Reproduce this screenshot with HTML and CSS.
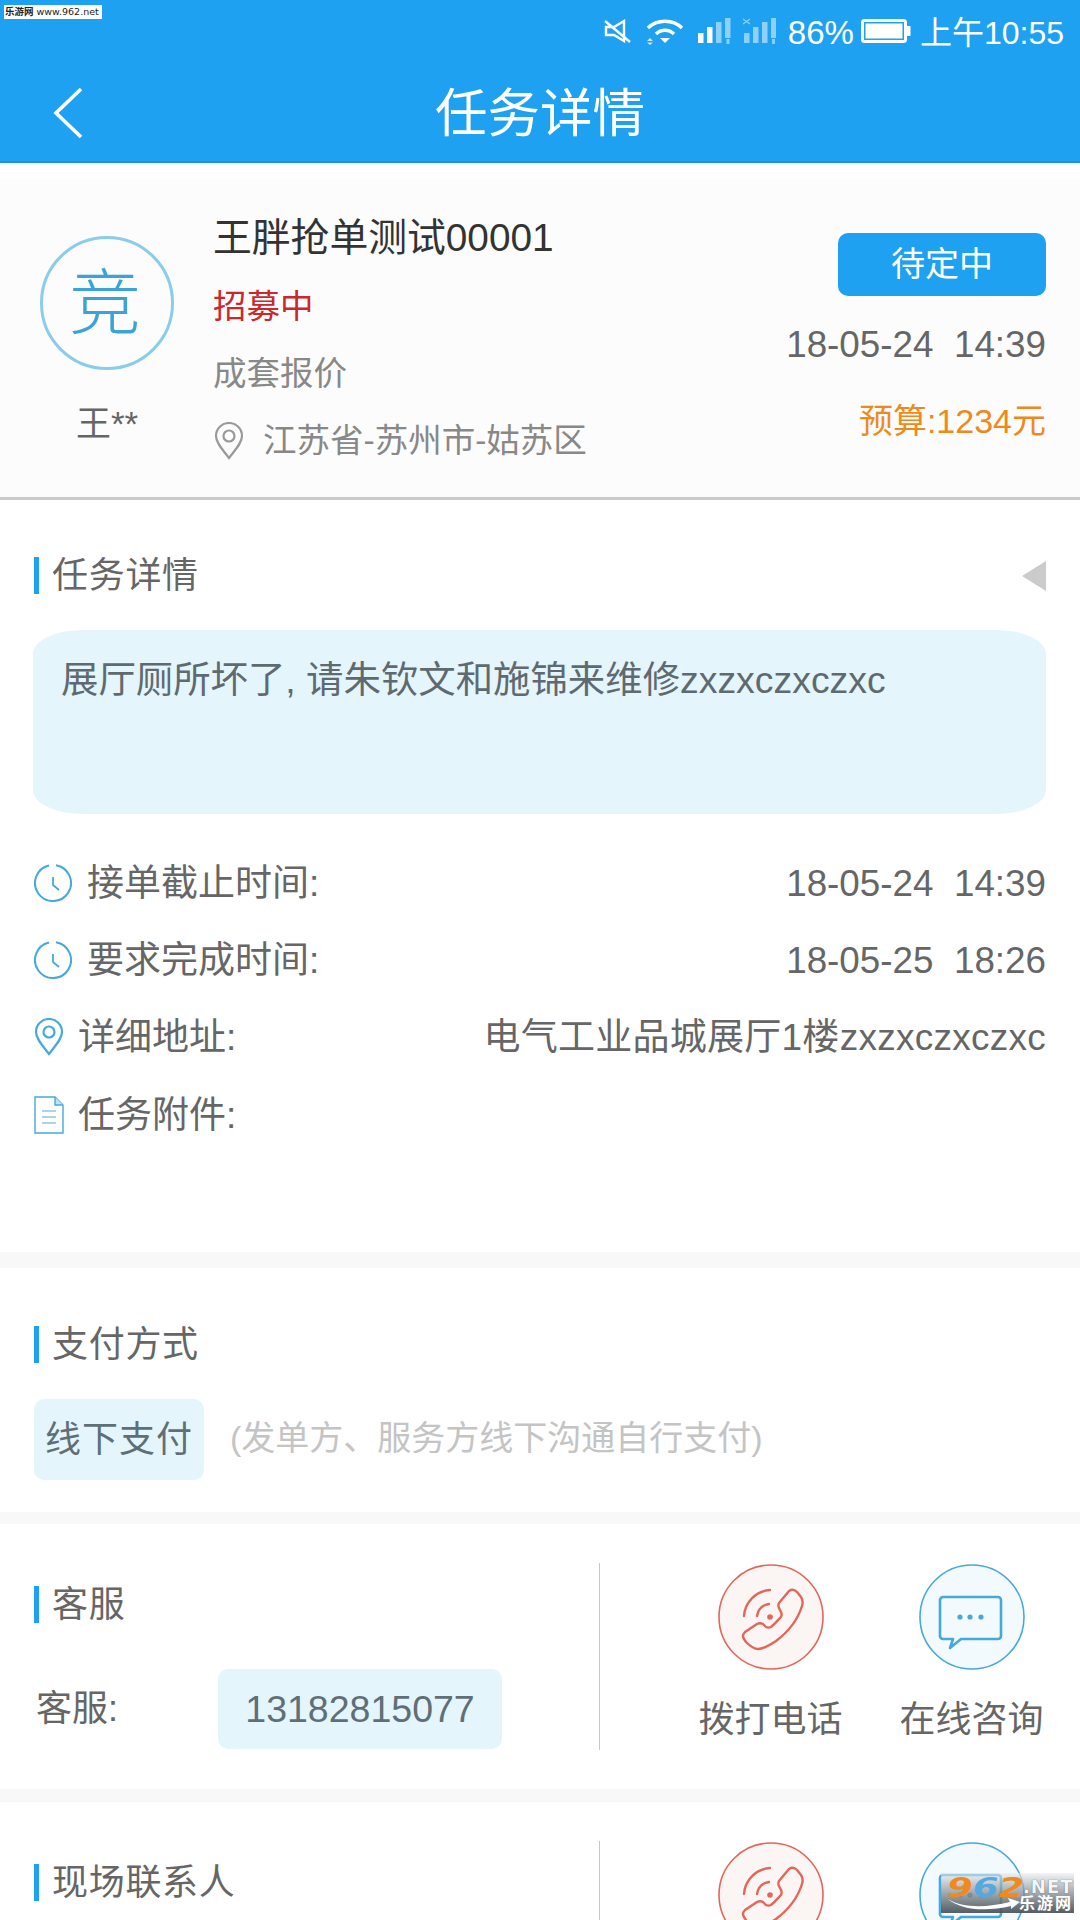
FILE: index.html
```html
<!DOCTYPE html>
<html lang="zh-CN">
<head>
<meta charset="utf-8">
<title>任务详情</title>
<link rel="stylesheet" href="styles.css">
</head>
<body>
<div class="page">
  <header class="appbar">
    <div class="status">
      <svg class="st-mute" viewBox="0 0 28 24"><g fill="none" stroke="#fff" stroke-width="2.4"><path d="M21 2v20L11 16H3V8h8z"/><path d="M2 2l25 21"/></g></svg>
      <svg class="st-wifi" viewBox="0 0 38 27"><g fill="none" stroke="#fff" stroke-width="3.4"><path d="M2 10C11 1 27 1 36 10"/><path d="M10 16c5-5 13-5 18 0"/></g><path d="M14 20h10l-5 5z" fill="#fff"/><path d="M1 23l3-3 3 3zM1 24.500l3 2.500 3-2.500z" fill="#cfe9fb"/></svg>
      <svg class="st-sig" viewBox="0 0 33 27"><g fill="#fff"><rect x="0" y="15" width="5.500" height="10"/><rect x="9" y="9" width="5.500" height="16"/></g><g fill="#8fd0f8"><rect x="18" y="4" width="5.500" height="21"/><rect x="27" y="0" width="5.500" height="20"/><rect x="28.500" y="21" width="3" height="5"/></g></svg>
      <svg class="st-sig" viewBox="0 0 33 27"><g fill="#8fd0f8"><rect x="1" y="15" width="5.500" height="10"/><rect x="10" y="9" width="5.500" height="16"/><rect x="19" y="4" width="5.500" height="21"/><rect x="28" y="0" width="5" height="20"/><rect x="29" y="21" width="3" height="5"/></g><path d="M0 1l7 5M7 1L0 6" stroke="#8fd0f8" stroke-width="1.400" fill="none"/></svg>
      <span class="st-pct">86%</span>
      <svg class="st-batt" viewBox="0 0 50 24"><rect x="1.500" y="1.500" width="43" height="21" rx="2" fill="#1ea1f1" stroke="#fff" stroke-width="3"/><rect x="4.500" y="4.500" width="37" height="15" fill="#fff"/><rect x="46" y="7" width="3.500" height="10" fill="#fff"/></svg>
      <span class="st-time">上午10:55</span>
    </div>
    <div class="navrow">
      <svg class="back" viewBox="0 0 30 52"><path d="M28 2L3 26l25 24" fill="none" stroke="#fff" stroke-width="3.6"/></svg>
      <h1 class="nav-title">任务详情</h1>
    </div>
  </header>

  <section class="summary">
    <div class="who">
      <div class="avatar">竞</div>
      <div class="who-name">王**</div>
    </div>
    <div class="info">
      <div class="info-title">王胖抢单测试00001</div>
      <div class="info-status">招募中</div>
      <div class="info-kind">成套报价</div>
      <div class="info-loc">
        <svg class="pin-gray" viewBox="0 0 30 38"><g fill="none" stroke="#999" stroke-width="2.2"><path d="M15 36C9 28 2 21 2 14a13 13 0 0 1 26 0c0 7-7 14-13 22z"/><circle cx="15" cy="14" r="5.5"/></g></svg>
        <span>江苏省-苏州市-姑苏区</span>
      </div>
    </div>
    <div class="meta">
      <div class="pending">待定中</div>
      <div class="meta-date">18-05-24&nbsp;&nbsp;14:39</div>
      <div class="meta-budget">预算:1234元</div>
    </div>
  </section>

  <section class="detail">
    <div class="head-row">
      <h2 class="heading">任务详情</h2>
      <span class="collapse"></span>
    </div>
    <div class="desc">展厅厕所坏了, 请朱钦文和施锦来维修zxzxczxczxc</div>
    <div class="row">
      <svg class="ic-clock" viewBox="0 0 38 38"><g fill="none" stroke="#45a9dc" stroke-width="2"><path d="M22 1.300A18 18 0 1 1 15 1.500"/><path d="M19 13v8l6 5" stroke-width="1.800"/></g></svg>
      <span class="row-label">接单截止时间:</span><span class="row-value">18-05-24&nbsp;&nbsp;14:39</span>
    </div>
    <div class="row">
      <svg class="ic-clock" viewBox="0 0 38 38"><g fill="none" stroke="#45a9dc" stroke-width="2"><path d="M22 1.300A18 18 0 1 1 15 1.500"/><path d="M19 13v8l6 5" stroke-width="1.800"/></g></svg>
      <span class="row-label">要求完成时间:</span><span class="row-value">18-05-25&nbsp;&nbsp;18:26</span>
    </div>
    <div class="row">
      <svg class="ic-small" viewBox="0 0 30 38"><g fill="none" stroke="#45a9dc" stroke-width="2.2"><path d="M15 36C9 28 2 21 2 14a13 13 0 0 1 26 0c0 7-7 14-13 22z"/><circle cx="15" cy="14" r="5.5"/></g></svg>
      <span class="row-label">详细地址:</span><span class="row-value row-addr">电气工业品城展厅1楼zxzxczxczxc</span>
    </div>
    <div class="row">
      <svg class="ic-small" viewBox="0 0 30 38"><g fill="none" stroke="#45a9dc" stroke-width="1.4"><path d="M1 1h20l8 8v28H1z"/><path d="M21 1v8h8" fill="#bfe2f3"/><path d="M8 15h14M8 21h14M8 27h14" stroke="#8cc8e6"/></g></svg>
      <span class="row-label">任务附件:</span>
    </div>
  </section>

  <section class="pay">
    <h2 class="heading">支付方式</h2>
    <div class="pay-row">
      <span class="chip">线下支付</span>
      <span class="pay-note">(发单方、服务方线下沟通自行支付)</span>
    </div>
  </section>

  <section class="contact">
    <div class="contact-left">
      <h2 class="heading">客服</h2>
      <div class="contact-line">
        <span class="contact-label">客服:</span>
        <span class="chip chip-phone">13182815077</span>
      </div>
    </div>
    <div class="actions">
      <div class="action">
        <svg class="round" viewBox="0 0 106 106"><circle cx="53" cy="53" r="52" fill="#fbf6f4" stroke="#e2665a" stroke-width="1.6"/><g fill="none" stroke="#e2665a" stroke-width="2.4" stroke-linecap="round" stroke-linejoin="round"><path d="M71 27C74 25 77 26 79 28L83 33C85 36 85 39 84 42C80 55 70 68 58 77C52 81 46 85 40 85C36 85 32 82 28 78L26 75C24 72 25 70 27 68L39 60C41 59 43 59 45 60L48 63C50 64 51 64 53 63C57 60 60 56 63 53C64 51 64 50 63 48L61 44C60 42 60 41 61 39Z"/><path d="M52 26C38 27 27 38 26 52"/><path d="M51 40C44 41 40 46 39 52"/></g><circle cx="52" cy="53" r="2.8" fill="#e2665a"/></svg>
        <span class="action-label">拨打电话</span>
      </div>
      <div class="action">
        <svg class="round" viewBox="0 0 106 106"><circle cx="53" cy="53" r="52" fill="#f3fafd" stroke="#45a9dc" stroke-width="1.6"/><path d="M21 36a3 3 0 0 1 3-3h55a3 3 0 0 1 3 3v36a3 3 0 0 1-3 3H42L31 84l3-9H24a3 3 0 0 1-3-3z" fill="none" stroke="#45a9dc" stroke-width="2.6" stroke-linejoin="round"/><g fill="#45a9dc"><circle cx="41" cy="53" r="2.6"/><circle cx="51" cy="53" r="2.6"/><circle cx="62" cy="53" r="2.6"/></g></svg>
        <span class="action-label">在线咨询</span>
      </div>
    </div>
  </section>

  <section class="contact">
    <div class="contact-left">
      <h2 class="heading">现场联系人</h2>
    </div>
    <div class="actions">
      <div class="action">
        <svg class="round" viewBox="0 0 106 106"><circle cx="53" cy="53" r="52" fill="#fbf6f4" stroke="#e2665a" stroke-width="1.6"/><g fill="none" stroke="#e2665a" stroke-width="2.4" stroke-linecap="round" stroke-linejoin="round"><path d="M71 27C74 25 77 26 79 28L83 33C85 36 85 39 84 42C80 55 70 68 58 77C52 81 46 85 40 85C36 85 32 82 28 78L26 75C24 72 25 70 27 68L39 60C41 59 43 59 45 60L48 63C50 64 51 64 53 63C57 60 60 56 63 53C64 51 64 50 63 48L61 44C60 42 60 41 61 39Z"/><path d="M52 26C38 27 27 38 26 52"/><path d="M51 40C44 41 40 46 39 52"/></g><circle cx="52" cy="53" r="2.8" fill="#e2665a"/></svg>
      </div>
      <div class="action">
        <svg class="round" viewBox="0 0 106 106"><circle cx="53" cy="53" r="52" fill="#f3fafd" stroke="#45a9dc" stroke-width="1.6"/><path d="M21 36a3 3 0 0 1 3-3h55a3 3 0 0 1 3 3v36a3 3 0 0 1-3 3H42L31 84l3-9H24a3 3 0 0 1-3-3z" fill="none" stroke="#45a9dc" stroke-width="2.6" stroke-linejoin="round"/><g fill="#45a9dc"><circle cx="41" cy="53" r="2.6"/><circle cx="51" cy="53" r="2.6"/><circle cx="62" cy="53" r="2.6"/></g></svg>
      </div>
    </div>
  </section>

  <div class="wm-top"><span class="wm-top-cn">乐游网</span> www.962.net</div>
  <div class="wm-logo">
    <svg class="wm-swoosh" viewBox="0 0 74 14"><path d="M1 2c14 9 38 9 62 3l-2-4 12 4-9 7 0-3C38 15 14 13 1 2z" fill="#fff"/></svg>
    <span class="wm-num"><b class="o">9</b><b class="b">6</b><b class="o">2</b></span>
    <span class="wm-net">.NET</span>
    <span class="wm-cn">乐游网</span>
  </div>
</div>
</body>
</html>
```

FILE: styles.css
```css
* { box-sizing: border-box; }
html, body { margin: 0; padding: 0; }
body {
  width: 1080px;
  height: 1920px;
  overflow: hidden;
  background: #fff;
  font-family: "Liberation Sans", "Noto Sans CJK SC", sans-serif;
  color: #666;
}
.page { position: relative; width: 1080px; height: 1920px; overflow: hidden; }

/* app bar */
.appbar { height: 163px; background: #1ea1f1; border-bottom: 2px solid #2191cf; }
.status { height: 66px; display: flex; align-items: center; justify-content: flex-end; padding-right: 16px; color: #fff; white-space: nowrap; }
.status svg { margin-bottom: 4px; flex: none; }
.st-mute { width: 28px; height: 24px; margin-right: 15px; }
.st-wifi { width: 38px; height: 27px; margin-right: 14px; }
.st-sig { width: 33px; height: 27px; margin-right: 12px; }
.st-pct { font-size: 33px; line-height: 66px; margin-right: 7px; }
.st-batt { width: 50px; height: 24px; margin-right: 9px; }
.st-time { font-size: 32px; line-height: 66px; }
.navrow { position: relative; height: 95px; display: flex; align-items: center; justify-content: center; }
.back { position: absolute; left: 53px; top: 21px; width: 30px; height: 52px; }
.nav-title { margin: 0; font-size: 52.5px; font-weight: 400; color: #fff; line-height: 60px; }

/* summary card */
.summary {
  margin-top: 15px;
  height: 322px;
  background: #fcfcfc;
  border-bottom: 3px solid #cbcbcb;
  display: flex;
  padding: 0 34px 0 40px;
}
.who { width: 134px; margin-right: 39px; padding-top: 58px; display: flex; flex-direction: column; align-items: center; flex: none; }
.avatar {
  width: 134px; height: 134px; border: 3px solid #8accec; border-radius: 50%;
  display: flex; align-items: center; justify-content: center;
  font-size: 72px; font-weight: 300; color: #3ba3d8; line-height: 1;
  padding-right: 4px;
}
.who-name { font-size: 35px; line-height: 40px; margin-top: 34px; color: #666; }
.info { flex: 1; padding-top: 38px; }
.info-title { font-size: 38.8px; line-height: 44px; color: #333; white-space: nowrap; }
.info-status { font-size: 33.5px; line-height: 40px; color: #c9282d; margin-top: 27px; }
.info-kind { font-size: 33.5px; line-height: 40px; color: #888; margin-top: 27px; }
.info-loc { display: flex; align-items: center; margin-top: 27px; color: #888; font-size: 33.5px; line-height: 40px; padding-left: 1px; }
.pin-gray { width: 30px; height: 38px; margin-right: 19px; }
.meta { width: 270px; display: flex; flex-direction: column; align-items: flex-end; padding-top: 55px; }
.pending { width: 208px; height: 63px; border-radius: 10px; background: #1ea1f1; color: #fff; font-size: 34px; line-height: 63px; text-align: center; }
.meta-date { font-size: 36.8px; line-height: 44px; margin-top: 27px; white-space: nowrap; color: #666; }
.meta-budget { font-size: 34px; line-height: 40px; margin-top: 34px; color: #ee8a1c; white-space: nowrap; }

/* section headings */
.heading {
  margin: 0;
  font-size: 36px;
  font-weight: 400;
  line-height: 37px;
  color: #666;
  border-left: 5px solid #1ea1f1;
  padding-left: 13px;
  letter-spacing: 0.7px;
}

/* task detail */
.detail { height: 768px; padding: 57px 34px 0 33px; border-bottom: 16px solid #f8f8f8; }
.head-row { display: flex; justify-content: space-between; align-items: center; padding-left: 1px; }
.collapse { width: 0; height: 0; border-style: solid; border-width: 15px 24px 15px 0; border-color: transparent #cbcbcb transparent transparent; }
.desc {
  margin-top: 36px;
  height: 184px;
  border-radius: 50px / 24px;
  background: #e4f5fc;
  padding: 28px 28px 0;
  font-size: 37.4px;
  line-height: 44px;
  color: #5f6a70;
  white-space: nowrap;
}
.row { display: flex; align-items: center; height: 77.4px; font-size: 37px; padding-left: 1px; line-height: 44px; }
.desc + .row { margin-top: 30px; }
.ic-clock { width: 38px; height: 38px; margin-right: 15px; flex: none; }
.ic-small { width: 30px; height: 38px; margin-right: 14px; flex: none; }
.row-label { color: #666; padding-top: 2px; }
.row-value { margin-left: auto; white-space: nowrap; color: #666; font-size: 36.8px; padding-top: 2px; }
.row-addr { font-size: 37px; letter-spacing: 0.26px; }

/* payment */
.pay { height: 256px; padding: 58px 34px 0; border-bottom: 12px solid #f8f8f8; }
.pay-row { display: flex; align-items: center; margin-top: 36px; }
.chip { background: #e4f5fc; border-radius: 10px; color: #5f6f78; font-size: 36px; white-space: nowrap; }
.pay-row .chip { width: 170px; height: 81px; line-height: 81px; text-align: center; letter-spacing: 1px; }
.pay-note { margin-left: 26px; font-size: 34px; color: #c4c4c4; white-space: nowrap; padding-bottom: 8px; }

/* contact */
.contact { height: 278px; display: flex; padding-top: 39px; border-bottom: 13px solid #f8f8f8; }
.contact-left { width: 600px; height: 187px; flex: none; border-right: 1px solid #c8c8c8; padding: 23px 0 0 34px; }
.contact-line { display: flex; align-items: center; margin-top: 46px; }
.contact-label { width: 184px; padding: 0 0 8px 2px; font-size: 36px; color: #666; }
.chip-phone { width: 284px; height: 80px; line-height: 80px; text-align: center; font-size: 37.5px; }
.actions { flex: 1; display: flex; gap: 58px; padding-left: 99px; }
.action { width: 143px; flex: none; display: flex; flex-direction: column; align-items: center; }
.round { width: 106px; height: 106px; margin-top: 1px; flex: none; }
.action-label { font-size: 36px; line-height: 44px; margin-top: 28px; white-space: nowrap; color: #666; }

/* watermarks */
.wm-top { position: absolute; left: 4px; top: 5px; width: 98px; height: 14px; padding-left: 1px; background: #fff; color: #222; font-family: "DejaVu Sans", "Noto Sans CJK SC", sans-serif; font-size: 9.5px; line-height: 14px; white-space: nowrap; }
.wm-top-cn { font-size: 9.5px; font-weight: 700; }
.wm-logo { position: absolute; left: 941px; top: 1873px; width: 133px; height: 40px; background: linear-gradient(rgba(232, 238, 242, 0.6), rgba(70, 80, 86, 0.92)); }
.wm-num { position: absolute; left: 6px; top: 1px; font-family: "DejaVu Sans", sans-serif; font-size: 27px; line-height: 28px; font-style: italic; transform: scaleX(1.37); transform-origin: left center; }
.wm-num b { font-weight: 700; }
.wm-num .o { color: #f08a1e; }
.wm-num .b { color: #58a8e0; }
.wm-net { position: absolute; left: 82px; top: 3px; font-family: "DejaVu Sans", sans-serif; font-size: 18px; line-height: 22px; font-weight: 700; color: #f4f6f7; letter-spacing: 1px; text-shadow: 0 0 1px #444; }
.wm-cn { position: absolute; left: 78px; top: 22px; font-size: 16px; line-height: 18px; font-weight: 700; color: #fff; letter-spacing: 2px; white-space: nowrap; }
.wm-swoosh { position: absolute; left: 6px; top: 24px; width: 74px; height: 14px; }
```
